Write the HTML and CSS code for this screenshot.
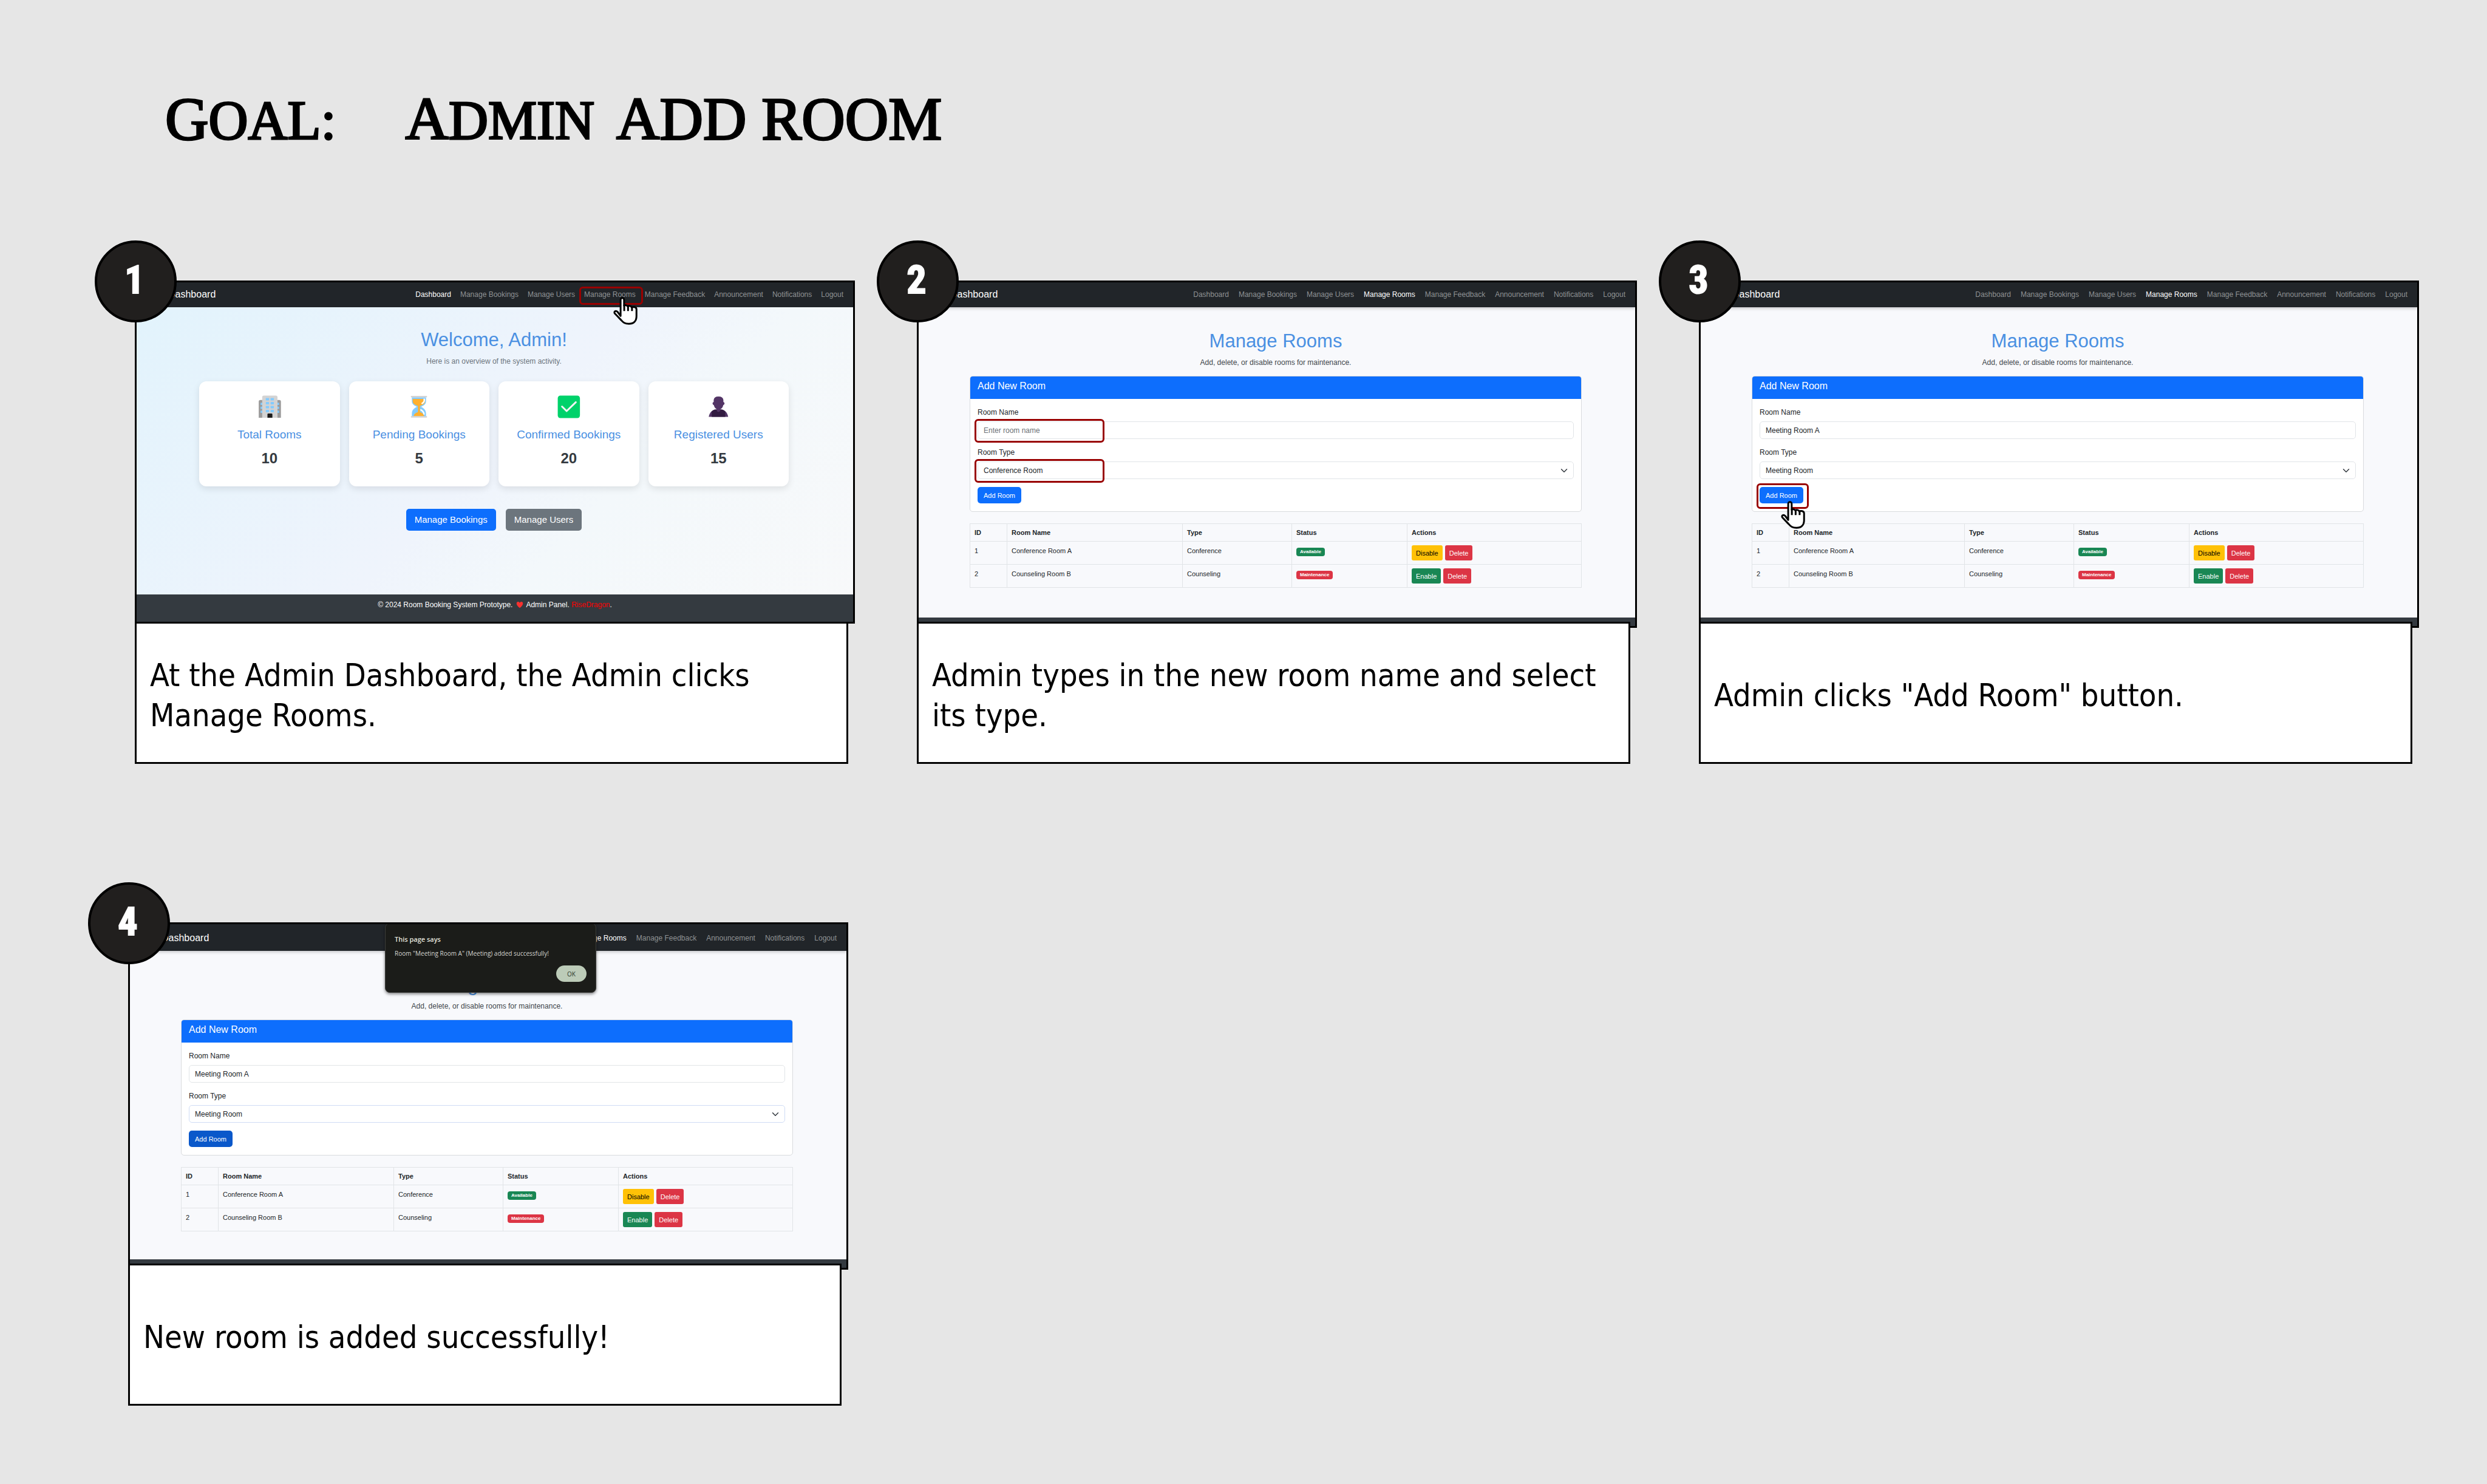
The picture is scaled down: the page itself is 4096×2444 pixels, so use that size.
FILE: index.html
```html
<!DOCTYPE html>
<html lang="en">
<head>
<meta charset="utf-8">
<title>Goal: Admin add room</title>
<link rel="stylesheet" href="styles.css">
</head>
<body>
<svg class="defs" aria-hidden="true">
  <symbol id="hand" viewBox="42 35 146 169">
    <path d="M86 150V52a10.500 10.500 0 0 1 21 0V88c4-5 18-4 22 4c6-5 20-3 24 6c8-5 29-3 29 12V152C182 180 166 198 136 198C112 198 102 190 90 176L50 134C44 122 58 116 68 126Z" fill="#fff" stroke="#000" stroke-width="11" stroke-linejoin="round"/>
    <path d="M108 84V120M131 90V120M155 96V120" stroke="#000" stroke-width="11"/>
  </symbol>
  <symbol id="chevron" viewBox="0 0 16 16">
    <path d="M2 5l6 6 6-6" fill="none" stroke="#343a40" stroke-width="2" stroke-linecap="round" stroke-linejoin="round"/>
  </symbol>
</svg>

<h1 class="goal"><span>G<small>oal:</small></span><span class="goal-text"><span>A<small>dmin</small></span> <span>ADD ROOM</span></span></h1>

<main class="board">
  <div class="row">
    <section class="step">
      <div class="screen screen-home">
        <nav class="nav">
          <a class="brand" href="#">Dashboard</a>
          <div class="links">
            <a class="active" href="#">Dashboard</a><a href="#">Manage Bookings</a><a href="#">Manage Users</a><a href="#">Manage Rooms</a><a href="#">Manage Feedback</a><a href="#">Announcement</a><a href="#">Notifications</a><a href="#">Logout</a>
          </div>
        </nav>
        <div class="home">
          <h2>Welcome, Admin!</h2>
          <p class="lead">Here is an overview of the system activity.</p>
          <div class="stats">
            <article class="stat">
              <svg viewBox="0 0 192 192" aria-hidden="true">
                <path d="M30 162V64q0-10 10-10h22v108zM165 162V64q0-10-10-10h-22v108z" fill="#9b9b9b"/>
                <path d="M42 71h10v14H42q-3-7 0-14zM42 95h10v14H42q-3-7 0-14zM42 119h10v14H42q-3-7 0-14zM153 71h-10v14h10q3-7 0-14zM153 95h-10v14h10q3-7 0-14zM153 119h-10v14h10q3-7 0-14z" fill="#83cbff"/>
                <path d="M51 162V38q0-10 10-10h73q10 0 10 10v124z" fill="#d3d3d3"/>
                <g fill="#83cbff"><rect x="73" y="42" width="20" height="15" rx="3"/><rect x="102" y="42" width="20" height="15" rx="3"/><rect x="73" y="66" width="20" height="15" rx="3"/><rect x="102" y="66" width="20" height="15" rx="3"/><rect x="73" y="90" width="20" height="15" rx="3"/><rect x="102" y="90" width="20" height="15" rx="3"/><rect x="73" y="114" width="20" height="15" rx="3"/><rect x="102" y="114" width="20" height="15" rx="3"/></g>
                <path d="M83 162v-20q0-5 5-5h20q5 0 5 5v20z" fill="#1c1c1c"/>
              </svg>
              <h3>Total Rooms</h3><p>10</p>
            </article>
            <article class="stat">
              <svg viewBox="0 0 192 192" aria-hidden="true">
                <path d="M53 38H139V62C139 80 126 88 108 96C126 104 139 116 139 136V154H53V136C53 116 66 104 85 96C66 88 53 80 53 62Z" fill="#83cbff"/>
                <path d="M58 48H133V62C133 76 122 84 102 90V128C116 132 126 140 127 153H64C65 140 76 132 90 128V90C70 84 58 76 58 62Z" fill="#ffb02e"/>
                <path d="M128 50C130 62 126 70 115 75M108 115C118 120 125 128 127 140" fill="none" stroke="#fff" stroke-width="9" stroke-linecap="round"/>
                <path d="M51 34H141M51 157H141" stroke="#d3d3d3" stroke-width="9" stroke-linecap="round"/>
              </svg>
              <h3>Pending Bookings</h3><p>5</p>
            </article>
            <article class="stat">
              <svg viewBox="0 0 192 192" aria-hidden="true">
                <rect x="28" y="28" width="135" height="136" rx="16" fill="#00d26a"/>
                <path d="M54 94L82 122L138 68" fill="none" stroke="#f4f4f4" stroke-width="11" stroke-linecap="round" stroke-linejoin="round"/>
              </svg>
              <h3>Confirmed Bookings</h3><p>20</p>
            </article>
            <article class="stat">
              <svg viewBox="0 0 192 192" aria-hidden="true">
                <path d="M38 157C42 134 54 120 74 113H120C140 120 152 134 156 157Z" fill="#533566"/>
                <path d="M56 157V124Q64 116 76 113H118Q130 116 138 124V157Z" fill="#321b41"/>
                <path d="M68 66V54Q70 33 97 33Q125 33 127 54V66Q135 68 134 76Q133 84 126 86Q124 102 108 112V118Q106 127 97 127Q88 127 87 118V112Q72 102 69 86Q62 84 61 76Q60 68 68 66Z" fill="#533566"/>
              </svg>
              <h3>Registered Users</h3><p>15</p>
            </article>
          </div>
          <div class="home-actions">
            <button class="btn btn-lg primary" type="button">Manage Bookings</button>
            <button class="btn btn-lg secondary" type="button">Manage Users</button>
          </div>
        </div>
        <footer class="home-footer">© 2024 Room Booking System Prototype. <svg viewBox="0 0 16 16" aria-label="love"><path d="M8 15C3 11 1 8 1 5C1 1 6 0 8 4C10 0 15 1 15 5C15 8 13 11 8 15Z" fill="#f8312f"/></svg> Admin Panel. <a href="#">RiseDragon</a>.</footer>
        <span class="mark mark-link"></span>
        <svg class="hand hand-link" aria-hidden="true"><use href="#hand"/></svg>
      </div>
      <p class="caption">At the Admin Dashboard, the Admin clicks Manage Rooms.</p>
      <span class="number">1</span>
    </section>

    <section class="step">
      <div class="screen screen-rooms">
        <nav class="nav">
          <a class="brand" href="#">Dashboard</a>
          <div class="links">
            <a href="#">Dashboard</a><a href="#">Manage Bookings</a><a href="#">Manage Users</a><a class="active" href="#">Manage Rooms</a><a href="#">Manage Feedback</a><a href="#">Announcement</a><a href="#">Notifications</a><a href="#">Logout</a>
          </div>
        </nav>
        <div class="rooms">
          <h2>Manage Rooms</h2>
          <p class="lead">Add, delete, or disable rooms for maintenance.</p>
          <form class="card">
            <h3>Add New Room</h3>
            <div class="fields">
              <label for="name2">Room Name</label>
              <input id="name2" type="text" placeholder="Enter room name">
              <label for="type2">Room Type</label>
              <div class="select"><select id="type2"><option>Conference Room</option></select><svg aria-hidden="true"><use href="#chevron"/></svg></div>
              <button class="btn primary" type="button">Add Room</button>
            </div>
          </form>
          <table>
            <colgroup><col class="c-id"><col class="c-name"><col class="c-type"><col class="c-status"><col></colgroup>
            <thead><tr><th>ID</th><th>Room Name</th><th>Type</th><th>Status</th><th>Actions</th></tr></thead>
            <tbody>
              <tr><td>1</td><td>Conference Room A</td><td>Conference</td><td><span class="badge success">Available</span></td><td><div class="actions"><button class="btn btn-sm warning" type="button">Disable</button><button class="btn btn-sm danger" type="button">Delete</button></div></td></tr>
              <tr><td>2</td><td>Counseling Room B</td><td>Counseling</td><td><span class="badge danger">Maintenance</span></td><td><div class="actions"><button class="btn btn-sm success" type="button">Enable</button><button class="btn btn-sm danger" type="button">Delete</button></div></td></tr>
            </tbody>
          </table>
        </div>
        <div class="strip"></div>
        <span class="mark mark-name"></span>
        <span class="mark mark-type"></span>
      </div>
      <p class="caption">Admin types in the new room name and select its type.</p>
      <span class="number">2</span>
    </section>

    <section class="step">
      <div class="screen screen-rooms">
        <nav class="nav">
          <a class="brand" href="#">Dashboard</a>
          <div class="links">
            <a href="#">Dashboard</a><a href="#">Manage Bookings</a><a href="#">Manage Users</a><a class="active" href="#">Manage Rooms</a><a href="#">Manage Feedback</a><a href="#">Announcement</a><a href="#">Notifications</a><a href="#">Logout</a>
          </div>
        </nav>
        <div class="rooms">
          <h2>Manage Rooms</h2>
          <p class="lead">Add, delete, or disable rooms for maintenance.</p>
          <form class="card">
            <h3>Add New Room</h3>
            <div class="fields">
              <label for="name3">Room Name</label>
              <input id="name3" type="text" value="Meeting Room A">
              <label for="type3">Room Type</label>
              <div class="select"><select id="type3"><option>Meeting Room</option></select><svg aria-hidden="true"><use href="#chevron"/></svg></div>
              <button class="btn primary" type="button">Add Room</button>
            </div>
          </form>
          <table>
            <colgroup><col class="c-id"><col class="c-name"><col class="c-type"><col class="c-status"><col></colgroup>
            <thead><tr><th>ID</th><th>Room Name</th><th>Type</th><th>Status</th><th>Actions</th></tr></thead>
            <tbody>
              <tr><td>1</td><td>Conference Room A</td><td>Conference</td><td><span class="badge success">Available</span></td><td><div class="actions"><button class="btn btn-sm warning" type="button">Disable</button><button class="btn btn-sm danger" type="button">Delete</button></div></td></tr>
              <tr><td>2</td><td>Counseling Room B</td><td>Counseling</td><td><span class="badge danger">Maintenance</span></td><td><div class="actions"><button class="btn btn-sm success" type="button">Enable</button><button class="btn btn-sm danger" type="button">Delete</button></div></td></tr>
            </tbody>
          </table>
        </div>
        <div class="strip"></div>
        <span class="mark mark-add"></span>
        <svg class="hand hand-add" aria-hidden="true"><use href="#hand"/></svg>
      </div>
      <p class="caption">Admin clicks "Add Room" button.</p>
      <span class="number">3</span>
    </section>
  </div>

  <div class="row row-last">
    <section class="step">
      <div class="screen screen-rooms screen-done">
        <nav class="nav">
          <a class="brand" href="#">Dashboard</a>
          <div class="links">
            <a href="#">Dashboard</a><a href="#">Manage Bookings</a><a href="#">Manage Users</a><a class="active" href="#">Manage Rooms</a><a href="#">Manage Feedback</a><a href="#">Announcement</a><a href="#">Notifications</a><a href="#">Logout</a>
          </div>
        </nav>
        <div class="rooms">
          <h2>Manage Rooms</h2>
          <p class="lead">Add, delete, or disable rooms for maintenance.</p>
          <form class="card">
            <h3>Add New Room</h3>
            <div class="fields">
              <label for="name4">Room Name</label>
              <input id="name4" type="text" value="Meeting Room A">
              <label for="type4">Room Type</label>
              <div class="select focused"><select id="type4"><option>Meeting Room</option></select><svg aria-hidden="true"><use href="#chevron"/></svg></div>
              <button class="btn primary pressed" type="button">Add Room</button>
            </div>
          </form>
          <table>
            <colgroup><col class="c-id"><col class="c-name"><col class="c-type"><col class="c-status"><col></colgroup>
            <thead><tr><th>ID</th><th>Room Name</th><th>Type</th><th>Status</th><th>Actions</th></tr></thead>
            <tbody>
              <tr><td>1</td><td>Conference Room A</td><td>Conference</td><td><span class="badge success">Available</span></td><td><div class="actions"><button class="btn btn-sm warning" type="button">Disable</button><button class="btn btn-sm danger" type="button">Delete</button></div></td></tr>
              <tr><td>2</td><td>Counseling Room B</td><td>Counseling</td><td><span class="badge danger">Maintenance</span></td><td><div class="actions"><button class="btn btn-sm success" type="button">Enable</button><button class="btn btn-sm danger" type="button">Delete</button></div></td></tr>
            </tbody>
          </table>
        </div>
        <div class="strip"></div>
        <div class="dialog" role="alertdialog" aria-labelledby="dialog-title">
          <strong id="dialog-title">This page says</strong>
          <p>Room "Meeting Room A" (Meeting) added successfully!</p>
          <button type="button">OK</button>
        </div>
      </div>
      <p class="caption">New room is added successfully!</p>
      <span class="number">4</span>
    </section>
  </div>
</main>
</body>
</html>
```
FILE: styles.css
```css
* { box-sizing: border-box; }

body {
  margin: 0;
  min-height: 100vh;
  padding: 136px 112px 131px 222px;
  background: #e6e6e6;
  color: #212529;
  font-family: "Liberation Sans", Arial, sans-serif;
  font-size: 12px;
  line-height: 18px;
}

h1, h2, h3, p { margin: 0; font-weight: 400; }
a { color: inherit; text-decoration: none; }
button, input, select { font-family: inherit; }
.defs { position: absolute; width: 0; height: 0; }

/* Board heading */
.goal {
  display: flex;
  gap: 114px;
  height: 120px;
  padding-left: 50px;
  color: #000;
  font-family: "Liberation Serif", "Times New Roman", serif;
  font-size: 99px;
  line-height: 120px;
  -webkit-text-stroke: 3px #000;
}
.goal-text { display: flex; gap: 36px; }
.goal small { font-size: 90px; text-transform: uppercase; }

/* Storyboard grid */
.board { margin-top: 206px; }
.row {
  display: grid;
  grid-template-columns: repeat(3, minmax(0, 1fr));
  gap: 102px;
  align-items: start;
}
.row-last { margin: 261px 11px 0 -11px; }
.step { position: relative; }

.screen {
  position: relative;
  overflow: hidden;
  border: 3px solid #000;
  background: #f8f9fc;
}
.screen-home { margin-bottom: -3px; background: linear-gradient(135deg, #e1f3fc, #eff4fc 50%, #f3f8fb 65%, #f8f9fa); }
.screen-rooms { margin-bottom: -10px; }

.caption {
  position: relative;
  display: flex;
  align-items: center;
  width: calc(100% - 11px);
  min-height: 234px;
  padding: 8px 22px 0;
  border: 3px solid #000;
  background: #fff;
  color: #000;
  font-family: "DejaVu Sans Condensed", "DejaVu Sans", sans-serif;
  font-size: 52px;
  line-height: 66px;
}

.number {
  position: absolute;
  top: -66px;
  left: -66px;
  display: grid;
  place-items: center;
  width: 135px;
  height: 135px;
  padding: 0 4px 4px 0;
  border: 4px solid #000;
  border-radius: 50%;
  background: #211f1e;
  color: #fff;
  font-family: Impact, "Liberation Sans Narrow", "Roboto Condensed", "Open Sans Condensed", "Liberation Sans", sans-serif;
  font-size: 64px;
  font-weight: 700;
  line-height: 72px;
  -webkit-text-stroke: 2px #fff;
}

/* Navigation bar of every screen */
.nav {
  position: relative;
  display: flex;
  align-items: center;
  justify-content: space-between;
  height: 41px;
  padding: 0 16px 2px 52px;
  background: #212529;
  color: #8f9294;
}
.brand { color: #fff; font-size: 16px; }
.links { display: flex; gap: 16px; }
.links .active { color: #fff; }
.screen-home .links { gap: 15px; }
.screen-rooms .nav { box-shadow: 0 2px 5px rgba(0, 0, 0, .2); }
.screen-done .nav { height: 44px; padding-top: 3px; }

/* Shared controls */
.btn {
  height: 27px;
  padding: 0 10px;
  border: 0;
  border-radius: 5px;
  color: #fff;
  font-size: 11px;
  line-height: 18px;
}
.btn-lg { height: 36px; padding: 0 14px; font-size: 15px; }
.btn-sm { height: 25px; padding: 0 7px; border-radius: 3px; }
.primary { background: #0d6efd; }
.pressed { background: #0a58ca; }
.secondary { background: #6c757d; }
.success { background: #198754; }
.danger { background: #dc3545; }
.warning { background: #ffc107; color: #000; }

/* Admin dashboard */
.home { padding: 36px 106px 105px 103px; text-align: center; }
.home h2 { color: #4a90e2; font-size: 31px; line-height: 36px; }
.home .lead { margin-top: 8px; color: #6c757d; }
.stats {
  display: grid;
  grid-template-columns: repeat(4, minmax(0, 1fr));
  gap: 15px;
  margin-top: 24px;
}
.stat {
  padding: 16px 8px 31px;
  border-radius: 12px;
  background: #fff;
  box-shadow: 0 4px 12px rgba(0, 0, 0, .1);
}
.stat svg { display: block; width: 52px; height: 52px; margin: 0 auto; }
.stat h3 { margin-top: 8px; color: #4a90e2; font-size: 19px; line-height: 24px; }
.stat p { margin-top: 12px; color: #343a40; font-size: 24px; font-weight: 700; line-height: 30px; }
.home-actions { display: flex; justify-content: center; gap: 16px; margin-top: 37px; }
.home-footer {
  height: 45px;
  padding-top: 8px;
  background: #343a40;
  color: #fff;
  text-align: center;
}
.home-footer svg { width: 16px; height: 12px; vertical-align: -2px; }
.home-footer a { color: #f00; }

/* Manage rooms */
.rooms { padding: 38px 88px 49px 84px; }
.rooms h2 { color: #4a90e2; font-size: 31px; line-height: 36px; text-align: center; }
.rooms .lead { margin-top: 8px; color: #41464b; text-align: center; }
.screen-done .rooms { padding-bottom: 46px; }
.card {
  margin: 13px 0 19px;
  overflow: hidden;
  border: 1px solid #d9dbde;
  border-radius: 5px;
  background: #fff;
}
.card h3 {
  padding: 6px 12px 11px;
  background: #0d6efd;
  color: #fff;
  font-size: 16px;
  line-height: 20px;
}
.fields { display: flex; flex-direction: column; align-items: flex-start; padding: 13px 12px; }
.fields input, .fields select {
  display: block;
  width: 100%;
  height: 29px;
  padding: 0 9px;
  border: 1px solid #e1e4e7;
  border-radius: 5px;
  background: #fff;
  color: #212529;
  font-size: 12px;
  appearance: none;
}
.fields input { margin: 6px 0 13px; }
.fields input::placeholder { color: #6c7176; opacity: 1; }
.select { position: relative; width: 100%; margin: 6px 0 13px; }
.select svg { position: absolute; top: 9px; right: 10px; width: 12px; height: 12px; pointer-events: none; }
.select.focused select { border-color: #cfdcf5; }

table {
  width: 100%;
  border-collapse: collapse;
  table-layout: fixed;
  font-size: 11px;
}
.c-id { width: 61px; }
.c-name { width: 289px; }
.c-type { width: 180px; }
.c-status { width: 190px; }
th, td { padding: 6px 7px; border: 1px solid #e1e4e7; text-align: left; vertical-align: top; }
th { height: 29px; padding: 5px 7px; }
td { height: 38px; }
.badge {
  display: inline-block;
  padding: 0 6px;
  border-radius: 4px;
  color: #fff;
  font-size: 8px;
  font-weight: 700;
  line-height: 14px;
}
.actions { display: flex; gap: 4px; }
.strip { height: 14px; background: #343a40; }

/* Browser alert */
.dialog {
  position: absolute;
  top: -2px;
  left: 420px;
  display: flex;
  flex-direction: column;
  width: 348px;
  height: 115px;
  padding: 17px 15px;
  border: 1px solid #3c3d3a;
  border-radius: 8px;
  background: #1b1c19;
  box-shadow: 0 2px 5px rgba(0, 0, 0, .5);
  color: #d5d6d1;
  font-family: "Open Sans", sans-serif;
  font-size: 10px;
}
.dialog strong { color: #e4e4dd; font-size: 11px; font-weight: 600; }
.dialog p { margin: 5px 0 11px; }
.dialog button {
  align-self: flex-end;
  width: 50px;
  height: 29px;
  border: 0;
  border-radius: 14px;
  background: #bccbb8;
  color: #2c382b;
  font-size: 10px;
}

/* Annotations laid over the screens */
.mark { position: absolute; border: 3px solid #990000; border-radius: 6px; }
.mark-link { top: 7px; left: 729px; width: 105px; height: 30px; }
.mark-name { top: 225px; left: 92px; width: 214px; height: 39px; }
.mark-type { top: 291px; left: 92px; width: 214px; height: 39px; }
.mark-add { top: 331px; left: 92px; width: 86px; height: 42px; }
.hand { position: absolute; width: 40px; height: 46px; }
.hand-link { top: 24px; left: 785px; }
.hand-add { top: 360px; left: 132px; }
```
